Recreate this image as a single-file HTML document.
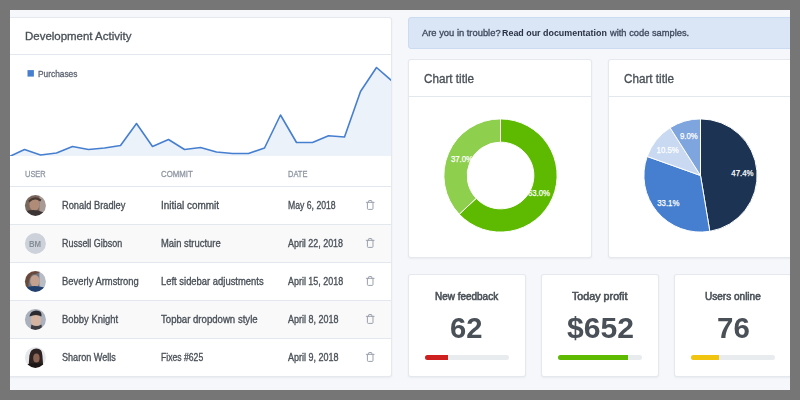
<!DOCTYPE html>
<html><head><meta charset="utf-8">
<style>
html,body{margin:0;padding:0;}
body{width:800px;height:400px;overflow:hidden;background:#f5f7fb;position:relative;font-family:"Liberation Sans",sans-serif;}
.t{position:absolute;white-space:nowrap;transform-origin:0 50%;z-index:3;}
.card{position:absolute;background:#fff;border:1px solid rgba(0,40,100,0.10);border-radius:3px;box-sizing:border-box;box-shadow:0 1px 2px rgba(0,0,0,0.05);}
.hl{position:absolute;height:1px;background:rgba(0,40,100,0.11);}
.frame{position:absolute;background:#767676;z-index:100;}
svg{position:absolute;left:0;top:0;}
.av{position:absolute;width:22px;height:22px;border-radius:50%;overflow:hidden;}
.trash{position:absolute;}
.bar{position:absolute;height:5px;border-radius:3px;background:#e9ecef;overflow:hidden;}
.bar i{position:absolute;left:0;top:0;bottom:0;}
</style></head><body>
<!-- left card -->
<div class="card" style="left:-20px;top:17px;width:412px;height:360px;"></div>
<div class="hl" style="left:0;top:54px;width:391px;"></div>
<div style="position:absolute;left:0;top:155px;width:391px;height:1px;"></div>
<div class="hl" style="left:0;top:186px;width:391px;"></div>
<div style="position:absolute;left:0;top:225px;width:391px;height:37px;background:#f9f9fa;"></div>
<div class="hl" style="left:0;top:224px;width:391px;"></div>
<div class="hl" style="left:0;top:262px;width:391px;"></div>
<div style="position:absolute;left:0;top:301px;width:391px;height:37px;background:#f9f9fa;"></div>
<div class="hl" style="left:0;top:300px;width:391px;"></div>
<div class="hl" style="left:0;top:338px;width:391px;"></div>


<!-- alert -->
<div style="position:absolute;left:408px;top:17px;width:420px;height:32px;box-sizing:border-box;background:#dae5f5;border:1px solid #cbdbf2;border-radius:3px;"></div>

<!-- chart cards -->
<div class="card" style="left:408px;top:59px;width:184px;height:199px;"></div>
<div class="hl" style="left:409px;top:96px;width:182px;"></div>
<div class="card" style="left:608px;top:59px;width:200px;height:199px;"></div>
<div class="hl" style="left:609px;top:96px;width:200px;"></div>

<!-- stat cards -->
<div class="card" style="left:408px;top:274px;width:118px;height:103px;"></div>
<div class="card" style="left:541px;top:274px;width:118px;height:103px;"></div>
<div class="card" style="left:674px;top:274px;width:118px;height:103px;"></div>
<div class="bar" style="left:424.6px;top:354.8px;width:84.2px;"><i style="width:23.5px;background:#cd201f;"></i></div>
<div class="bar" style="left:558.2px;top:354.8px;width:84px;"><i style="width:70.3px;background:#5eba00;"></i></div>
<div class="bar" style="left:691px;top:354.8px;width:84.4px;"><i style="width:28.1px;background:#f1c40f;"></i></div>

<svg width="800" height="400" viewBox="0 0 800 400">
<defs><clipPath id="c1"><rect x="0" y="55" width="391" height="101"/></clipPath></defs>
<g clip-path="url(#c1)">
<path d="M8.5,156 L8.5,157.0 L24.5,149.5 L40.5,155.0 L56.5,153.0 L72.5,146.5 L88.5,149.5 L104.5,148.0 L120.5,145.5 L136.5,123.5 L152.5,146.5 L168.5,139.5 L184.5,149.5 L200.5,147.5 L216.5,152.0 L232.5,153.5 L248.5,153.5 L264.5,148.0 L280.5,115.0 L296.5,142.5 L312.5,142.5 L328.5,135.8 L344.5,137.0 L360.5,91.5 L376.5,67.5 L392.5,81.5 L392.5,156 Z" fill="#467fcf" fill-opacity="0.1"/>
<polyline points="8.5,157.0 24.5,149.5 40.5,155.0 56.5,153.0 72.5,146.5 88.5,149.5 104.5,148.0 120.5,145.5 136.5,123.5 152.5,146.5 168.5,139.5 184.5,149.5 200.5,147.5 216.5,152.0 232.5,153.5 248.5,153.5 264.5,148.0 280.5,115.0 296.5,142.5 312.5,142.5 328.5,135.8 344.5,137.0 360.5,91.5 376.5,67.5 392.5,81.5" fill="none" stroke="#467fcf" stroke-width="1.6" stroke-linejoin="round"/>
</g>
<rect x="27.5" y="70.1" width="6.4" height="6.5" fill="#467fcf"/>
<g font-family="Liberation Sans" font-size="8.6" fill="#fff" stroke="#fff" stroke-width="0.25"><path d="M500.50,118.90 A56.60,56.60 0 1 1 459.24,214.25 L476.19,198.33 A33.35,33.35 0 1 0 500.50,142.15 Z" fill="#5eba00" stroke="#fff" stroke-width="1"/><path d="M459.24,214.25 A56.60,56.60 0 0 1 500.50,118.90 L500.50,142.15 A33.35,33.35 0 0 0 476.19,198.33 Z" fill="#8ecf4d" stroke="#fff" stroke-width="1"/><text x="527.9" y="192.8" dominant-baseline="central" textLength="22.2" lengthAdjust="spacingAndGlyphs">63.0%</text><text x="450.9" y="159.4" dominant-baseline="central" textLength="22.2" lengthAdjust="spacingAndGlyphs">37.0%</text></g>
<g font-family="Liberation Sans" font-size="8.6" fill="#fff" stroke="#fff" stroke-width="0.25"><path d="M700.50,175.50 L700.50,118.90 A56.60,56.60 0 0 1 709.82,231.33 Z" fill="#1c3353" stroke="#fff" stroke-width="1"/><path d="M700.50,175.50 L709.82,231.33 A56.60,56.60 0 0 1 647.19,156.49 Z" fill="#467fcf" stroke="#fff" stroke-width="1"/><path d="M700.50,175.50 L647.19,156.49 A56.60,56.60 0 0 1 670.10,127.75 Z" fill="#c8d9f1" stroke="#fff" stroke-width="1"/><path d="M700.50,175.50 L670.10,127.75 A56.60,56.60 0 0 1 700.50,118.90 Z" fill="#7ea5dd" stroke="#fff" stroke-width="1"/><text x="731.3" y="172.6" dominant-baseline="central" textLength="22.2" lengthAdjust="spacingAndGlyphs">47.4%</text><text x="657.2" y="203.1" dominant-baseline="central" textLength="22.2" lengthAdjust="spacingAndGlyphs">33.1%</text><text x="656.6" y="149.9" dominant-baseline="central" textLength="22.2" lengthAdjust="spacingAndGlyphs">10.5%</text><text x="679.9" y="135.8" dominant-baseline="central" textLength="17.8" lengthAdjust="spacingAndGlyphs">9.0%</text></g>
<!-- trash icons -->
<g fill="none" stroke="#9aa0ac" stroke-width="1" stroke-linecap="round" stroke-linejoin="round">
<path transform="translate(0,0)" d="M366.3,202.3 h7.8 M368.6,202.3 v-1.2 q0,-0.6 0.6,-0.6 h2 q0.6,0 0.6,0.6 v1.2 M367.4,202.5 v6 q0,0.9 0.9,0.9 h3.8 q0.9,0 0.9,-0.9 v-6"/><path transform="translate(0,38)" d="M366.3,202.3 h7.8 M368.6,202.3 v-1.2 q0,-0.6 0.6,-0.6 h2 q0.6,0 0.6,0.6 v1.2 M367.4,202.5 v6 q0,0.9 0.9,0.9 h3.8 q0.9,0 0.9,-0.9 v-6"/><path transform="translate(0,76)" d="M366.3,202.3 h7.8 M368.6,202.3 v-1.2 q0,-0.6 0.6,-0.6 h2 q0.6,0 0.6,0.6 v1.2 M367.4,202.5 v6 q0,0.9 0.9,0.9 h3.8 q0.9,0 0.9,-0.9 v-6"/><path transform="translate(0,114)" d="M366.3,202.3 h7.8 M368.6,202.3 v-1.2 q0,-0.6 0.6,-0.6 h2 q0.6,0 0.6,0.6 v1.2 M367.4,202.5 v6 q0,0.9 0.9,0.9 h3.8 q0.9,0 0.9,-0.9 v-6"/><path transform="translate(0,152)" d="M366.3,202.3 h7.8 M368.6,202.3 v-1.2 q0,-0.6 0.6,-0.6 h2 q0.6,0 0.6,0.6 v1.2 M367.4,202.5 v6 q0,0.9 0.9,0.9 h3.8 q0.9,0 0.9,-0.9 v-6"/>
</g>
</svg>

<!-- avatars -->
<svg width="800" height="400" viewBox="0 0 800 400" style="z-index:2">
<defs><clipPath id="avc"><circle cx="0" cy="0" r="10.5"/></clipPath>
<filter id="bl" x="-20%" y="-20%" width="140%" height="140%"><feGaussianBlur stdDeviation="0.7"/></filter></defs>
<g transform="translate(35.4,205.4)" clip-path="url(#avc)"><g filter="url(#bl)">
<rect x="-11" y="-11" width="22" height="22" fill="#7a675e"/>
<rect x="4" y="-11" width="8" height="22" fill="#a89a94"/>
<ellipse cx="-1" cy="-1" rx="5" ry="6.5" fill="#b08c78"/>
<path d="M-7,-5 Q-1,-11 6,-6 L5,-4 Q-1,-8 -6,-3 Z" fill="#4a3a32"/>
<path d="M-11,11 L-10,6 Q-1,3 8,7 L11,11 Z" fill="#3e3634"/>
</g></g>
<g transform="translate(35.4,243.4)" clip-path="url(#avc)">
<rect x="-11" y="-11" width="22" height="22" fill="#cdd1da"/>
</g>
<g transform="translate(35.4,281.4)" clip-path="url(#avc)"><g filter="url(#bl)">
<rect x="-11" y="-11" width="22" height="22" fill="#6e7480"/>
<rect x="4" y="-11" width="8" height="22" fill="#b8bcc4"/>
<path d="M-11,-11 L6,-11 Q2,-7 -3,-7 Q-7,-4 -7,6 L-11,6 Z" fill="#6a4a3a"/>
<ellipse cx="-0.5" cy="-0.5" rx="4.8" ry="6" fill="#c4a08e"/>
<path d="M-11,11 L-10,6 Q-1,3 9,6 L11,11 Z" fill="#22406e"/>
</g></g>
<g transform="translate(35.4,319.4)" clip-path="url(#avc)"><g filter="url(#bl)">
<rect x="-11" y="-11" width="22" height="22" fill="#aab0bc"/>
<ellipse cx="0.5" cy="1" rx="5" ry="6.5" fill="#d4b4a0"/>
<path d="M-6,-3 Q-5,-9 1,-9 Q7,-9 6,-3 Q1,-6 -6,-3 Z" fill="#2a2a2e"/>
<path d="M-5,11 L-4,5 Q1,8 6,5 L7,11 Z" fill="#3a3a40"/>
</g></g>
<g transform="translate(35.4,357.4)" clip-path="url(#avc)"><g filter="url(#bl)">
<rect x="-11" y="-11" width="22" height="22" fill="#e6e8ec"/>
<path d="M-7,11 L-6,-2 Q-5,-9 1,-9 Q7,-9 7,-2 L8,11 Z" fill="#2e2420"/>
<ellipse cx="1" cy="0.5" rx="3.2" ry="4.5" fill="#8a6454"/>
<path d="M-11,11 L-9,7 Q0,4 9,7 L11,11 Z" fill="#1e1816"/>
</g></g>
</svg>
<span class="t" style="left:28.9px;top:239.2px;font-size:8.4px;line-height:10px;font-weight:bold;color:#868e96;transform:scaleX(0.93)">BM</span>
<span class="t" style="left:24.90px;top:30.15px;font-size:11.63px;line-height:11.63px;-webkit-text-stroke:0.32px #495057;transform:scaleX(0.9860);color:#495057;">Development Activity</span>
<span class="t" style="left:38.00px;top:69.76px;font-size:9.38px;line-height:9.38px;-webkit-text-stroke:0.32px #5f6673;transform:scaleX(0.8894);color:#5f6673;">Purchases</span>
<span class="t" style="left:25.00px;top:169.18px;font-size:9.59px;line-height:9.59px;-webkit-text-stroke:0.32px #8f96a3;transform:scaleX(0.7781);color:#8f96a3;">USER</span>
<span class="t" style="left:161.25px;top:169.18px;font-size:9.59px;line-height:9.59px;-webkit-text-stroke:0.32px #8f96a3;transform:scaleX(0.8162);color:#8f96a3;">COMMIT</span>
<span class="t" style="left:288.00px;top:169.18px;font-size:9.59px;line-height:9.59px;-webkit-text-stroke:0.32px #8f96a3;transform:scaleX(0.7833);color:#8f96a3;">DATE</span>
<span class="t" style="left:62.00px;top:200.71px;font-size:10.03px;line-height:10.03px;-webkit-text-stroke:0.32px #495057;transform:scaleX(0.9257);color:#495057;">Ronald Bradley</span>
<span class="t" style="left:161.25px;top:200.71px;font-size:10.03px;line-height:10.03px;-webkit-text-stroke:0.32px #495057;transform:scaleX(0.9911);color:#495057;">Initial commit</span>
<span class="t" style="left:287.90px;top:200.71px;font-size:10.03px;line-height:10.03px;-webkit-text-stroke:0.32px #495057;transform:scaleX(0.8649);color:#495057;">May 6, 2018</span>
<span class="t" style="left:62.00px;top:238.71px;font-size:10.03px;line-height:10.03px;-webkit-text-stroke:0.32px #495057;transform:scaleX(0.8933);color:#495057;">Russell Gibson</span>
<span class="t" style="left:161.25px;top:238.71px;font-size:10.03px;line-height:10.03px;-webkit-text-stroke:0.32px #495057;transform:scaleX(0.9404);color:#495057;">Main structure</span>
<span class="t" style="left:287.90px;top:238.71px;font-size:10.03px;line-height:10.03px;-webkit-text-stroke:0.32px #495057;transform:scaleX(0.8904);color:#495057;">April 22, 2018</span>
<span class="t" style="left:62.00px;top:276.71px;font-size:10.03px;line-height:10.03px;-webkit-text-stroke:0.32px #495057;transform:scaleX(0.9385);color:#495057;">Beverly Armstrong</span>
<span class="t" style="left:161.25px;top:276.71px;font-size:10.03px;line-height:10.03px;-webkit-text-stroke:0.32px #495057;transform:scaleX(0.9403);color:#495057;">Left sidebar adjustments</span>
<span class="t" style="left:287.90px;top:276.71px;font-size:10.03px;line-height:10.03px;-webkit-text-stroke:0.32px #495057;transform:scaleX(0.8920);color:#495057;">April 15, 2018</span>
<span class="t" style="left:62.00px;top:314.71px;font-size:10.03px;line-height:10.03px;-webkit-text-stroke:0.32px #495057;transform:scaleX(0.9426);color:#495057;">Bobby Knight</span>
<span class="t" style="left:161.25px;top:314.71px;font-size:10.03px;line-height:10.03px;-webkit-text-stroke:0.32px #495057;transform:scaleX(0.9589);color:#495057;">Topbar dropdown style</span>
<span class="t" style="left:287.90px;top:314.71px;font-size:10.03px;line-height:10.03px;-webkit-text-stroke:0.32px #495057;transform:scaleX(0.8968);color:#495057;">April 8, 2018</span>
<span class="t" style="left:62.00px;top:352.71px;font-size:10.03px;line-height:10.03px;-webkit-text-stroke:0.32px #495057;transform:scaleX(0.9080);color:#495057;">Sharon Wells</span>
<span class="t" style="left:161.25px;top:352.71px;font-size:10.03px;line-height:10.03px;-webkit-text-stroke:0.32px #495057;transform:scaleX(0.8615);color:#495057;">Fixes #625</span>
<span class="t" style="left:287.90px;top:352.71px;font-size:10.03px;line-height:10.03px;-webkit-text-stroke:0.32px #495057;transform:scaleX(0.8968);color:#495057;">April 9, 2018</span>
<span class="t" style="left:421.65px;top:28.38px;font-size:9.59px;line-height:9.59px;-webkit-text-stroke:0.32px #3f4a5e;transform:scaleX(0.9778);color:#3f4a5e;">Are you in trouble?</span>
<span class="t" style="left:502.20px;top:28.38px;font-size:9.59px;line-height:9.59px;font-weight:bold;transform:scaleX(0.9291);color:#283244;">Read our documentation</span>
<span class="t" style="left:610.45px;top:28.38px;font-size:9.59px;line-height:9.59px;-webkit-text-stroke:0.32px #3f4a5e;transform:scaleX(0.9714);color:#3f4a5e;">with code samples.</span>
<span class="t" style="left:424.10px;top:73.61px;font-size:11.92px;line-height:11.92px;-webkit-text-stroke:0.32px #495057;transform:scaleX(0.9821);color:#495057;">Chart title</span>
<span class="t" style="left:624.10px;top:73.61px;font-size:11.92px;line-height:11.92px;-webkit-text-stroke:0.32px #495057;transform:scaleX(0.9821);color:#495057;">Chart title</span>
<span class="t" style="left:434.60px;top:291.76px;font-size:10.32px;line-height:10.32px;-webkit-text-stroke:0.55px #495057;transform:scaleX(0.9659);color:#495057;">New feedback</span>
<span class="t" style="left:572.40px;top:291.96px;font-size:10.32px;line-height:10.32px;-webkit-text-stroke:0.55px #495057;transform:scaleX(1.0402);color:#495057;">Today profit</span>
<span class="t" style="left:705.00px;top:291.76px;font-size:10.32px;line-height:10.32px;-webkit-text-stroke:0.55px #495057;transform:scaleX(0.9725);color:#495057;">Users online</span>
<span class="t" style="left:450.40px;top:313.24px;font-size:29.36px;line-height:29.36px;font-weight:bold;transform:scaleX(0.9941);color:#495057;">62</span>
<span class="t" style="left:566.70px;top:313.24px;font-size:29.36px;line-height:29.36px;font-weight:bold;transform:scaleX(1.0256);color:#495057;">$652</span>
<span class="t" style="left:716.90px;top:313.24px;font-size:29.36px;line-height:29.36px;font-weight:bold;transform:scaleX(1.0034);color:#495057;">76</span>

<div class="frame" style="left:0;top:0;width:800px;height:10px;"></div>
<div class="frame" style="left:0;top:390px;width:800px;height:10px;"></div>
<div class="frame" style="left:0;top:0;width:10px;height:400px;"></div>
<div class="frame" style="left:790px;top:0;width:10px;height:400px;"></div>
</body></html>
